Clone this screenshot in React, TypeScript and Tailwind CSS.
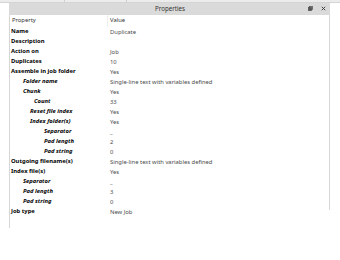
const rows: { label: string; value: string; indent: number; italic?: boolean }[] = [
  { label: 'Name', value: 'Duplicate', indent: 10 },
  { label: 'Description', value: '', indent: 10 },
  { label: 'Action on', value: 'Job', indent: 10 },
  { label: 'Duplicates', value: '10', indent: 10 },
  { label: 'Assemble in job folder', value: 'Yes', indent: 10 },
  { label: 'Folder name', value: 'Single-line text with variables defined', indent: 22, italic: true },
  { label: 'Chunk', value: 'Yes', indent: 22, italic: true },
  { label: 'Count', value: '33', indent: 33, italic: true },
  { label: 'Reset file index', value: 'Yes', indent: 29, italic: true },
  { label: 'Index folder(s)', value: 'Yes', indent: 29, italic: true },
  { label: 'Separator', value: '_', indent: 43, italic: true },
  { label: 'Pad length', value: '2', indent: 43, italic: true },
  { label: 'Pad string', value: '0', indent: 43, italic: true },
  { label: 'Outgoing filename(s)', value: 'Single-line text with variables defined', indent: 10 },
  { label: 'Index file(s)', value: 'Yes', indent: 10 },
  { label: 'Separator', value: '_', indent: 22, italic: true },
  { label: 'Pad length', value: '3', indent: 22, italic: true },
  { label: 'Pad string', value: '0', indent: 22, italic: true },
  { label: 'Job type', value: 'New Job', indent: 10 },
]

const App = () => {
  return (
    <div className="w-[340px] h-[260px] bg-white overflow-hidden text-[5.85px] leading-none" style={{ fontFamily: '"Noto Sans", "Open Sans", sans-serif' }}>
      {/* tab strip, cut off at the top */}
      <div className="h-[3px] bg-[#ececec] border-b border-[#d4d4d4] flex">
        <div className="w-[65px] border-r border-[#cfcfcf]" />
        <div className="w-[62px] border-r border-[#cfcfcf]" />
      </div>

      <div className="ml-[9px] w-[321px]">
        {/* title bar */}
        <div className="h-[12px] bg-[#dadada] flex items-center relative">
          <span className="flex-1 text-center text-[#333] text-[6.2px] pl-[1px]">Properties</span>
          <div className="absolute right-[4px] top-[3px] flex items-center gap-[8px]">
            <svg width="5" height="5" viewBox="0 0 5 5">
              <rect x="1.5" y="0.5" width="3" height="3" fill="none" stroke="#555" strokeWidth="0.8" />
              <rect x="0.5" y="1.5" width="3" height="3" fill="#555" stroke="#555" strokeWidth="0.8" />
            </svg>
            <svg width="5" height="5" viewBox="0 0 5 5">
              <path d="M0.8 0.8 L4.2 4.2 M4.2 0.8 L0.8 4.2" stroke="#444" strokeWidth="1" />
            </svg>
          </div>
        </div>

        <div className="border-l border-[#d6d6d6] h-[213px]">
          <div className="border-r border-[#d6d6d6] h-[195px]">
            {/* header */}
            <div className="h-[12px] flex items-center text-[#333]">
              <div className="w-[98px] pl-[2px] border-r border-[#eeeeee] h-full flex items-center">Property</div>
              <div className="pl-[2px]">Value</div>
            </div>
            {rows.map((r, i) => (
              <div key={i} className="h-[10px] flex items-center">
                <div className="w-[99px] font-bold text-black whitespace-nowrap" style={{ paddingLeft: r.indent - 9 }}>
                  <span className={r.italic ? 'italic' : ''}>{r.label}</span>
                </div>
                <div className="pl-[1px] pt-[2px] text-[#4a4a4a] whitespace-nowrap">{r.value}</div>
              </div>
            ))}
          </div>
        </div>
      </div>
    </div>
  )
}

export default App
